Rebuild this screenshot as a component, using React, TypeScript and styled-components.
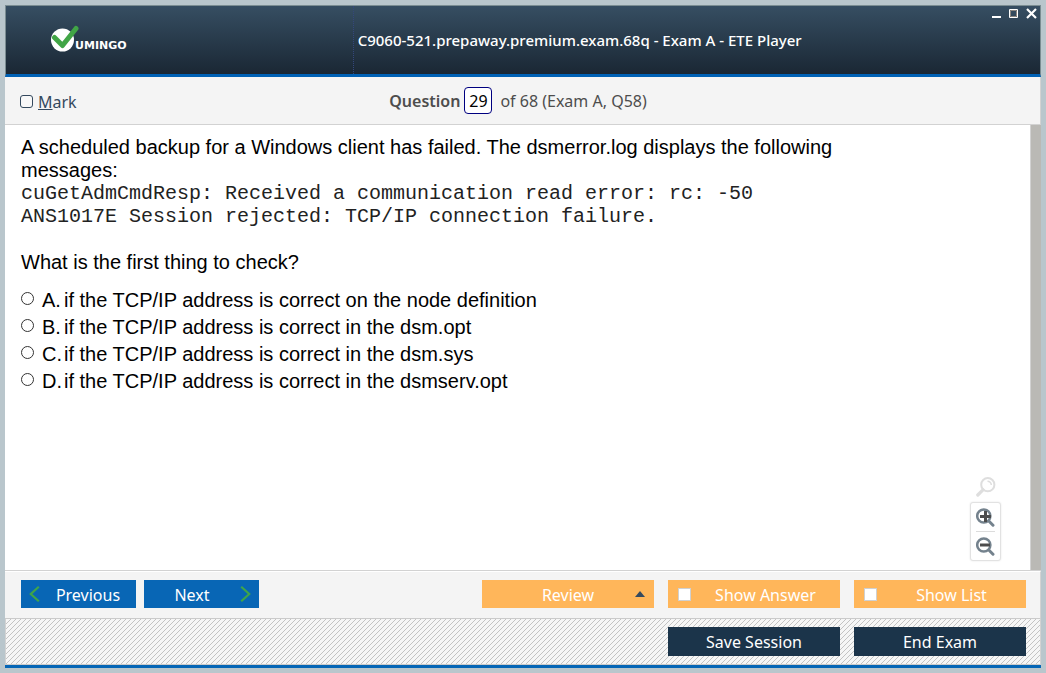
import React, { useState } from "react";
import styled, { createGlobalStyle, css } from "styled-components";

const ui = `"Noto Sans", "Open Sans", sans-serif`;

const GlobalStyle = createGlobalStyle`
  * { box-sizing: border-box; }
  html, body, #root { height: 100%; }
  body { margin: 0; background: #b9c6cc; font-family: ${ui}; font-size: 16px; }
  button, input { font: inherit; }
`;

const Desktop = styled.div`
  min-height: 100%;
  padding: 5px;
  display: flex;
`;

const Window = styled.div`
  flex: 1;
  min-width: 0;
  display: flex;
  flex-direction: column;
  background: #f4f4f4;
  border-bottom: 3px solid #0566b6;
`;

const TitleBar = styled.header`
  display: grid;
  grid-template-columns: 1fr 1fr 1fr;
  height: 72px;
  color: #fff;
  background: linear-gradient(#364e62, #1a2734);
  border: 1px solid #7b8d92;
  border-bottom: 3px solid #0061b5;
  & > * { min-width: 0; }
`;

const Brand = styled.div`
  align-self: center;
  padding-left: 44px;
  svg { display: block; }
`;

const Title = styled.h1`
  margin: 0 0 0 2px;
  padding-left: 4px;
  display: flex;
  align-items: center;
  font-size: 15px;
  font-weight: 500;
  white-space: nowrap;
  border-left: 1px dotted #34477c;
`;

const WindowControls = styled.div`
  display: flex;
  justify-content: flex-end;
  align-items: flex-start;
`;

const ControlButton = styled.button`
  padding: 0;
  border: 0;
  color: #fff;
  background: none;
  svg { display: block; }
`;

const QuestionBar = styled.div`
  display: grid;
  grid-template-columns: 1fr auto 1fr;
  align-items: center;
  height: 48px;
  padding: 0 24px 0 15px;
  color: #4d4d4d;
  border-right: 1px solid #d2d2d2;
  border-bottom: 1px solid #d2d2d2;
`;

const MarkLabel = styled.label`
  display: flex;
  align-items: center;
  gap: 5px;
  padding-top: 2px;
  font-size: 16px;
  color: #34495e;
`;

const MarkBox = styled.input`
  appearance: none;
  width: 13px;
  height: 13px;
  margin: 0;
  border: 1px solid #34495e;
  border-radius: 3px;
  background: #f8f8f8;
  &:checked { background: #34495e; }
`;

const Position = styled.div`
  display: flex;
  align-items: center;
  gap: 4px;
`;

const PositionLabel = styled.label`
  font-weight: 600;
`;

const PositionInput = styled.input`
  width: 28px;
  height: 27px;
  padding: 0;
  margin-right: 4px;
  text-align: center;
  color: #000;
  background: #fff;
  border: 1px solid #000080;
  border-radius: 4px;
`;

const Body = styled.main`
  flex: 1;
  display: flex;
  background: #fff;
  border-bottom: 1px solid #d2d2d2;
`;

const Content = styled.section`
  flex: 1;
  min-width: 0;
  padding: 11px 16px;
  font-family: "Liberation Sans", Arial, sans-serif;
  font-size: 20px;
  line-height: 23px;
  color: #000;
  position: relative;
`;

const Scenario = styled.p`
  margin: 0 0 23px;
  max-width: 840px;
`;

const Prompt = styled.p`
  margin: 0 0 13px;
`;

const Log = styled.code`
  display: block;
  font-family: "Liberation Mono", "Courier New", monospace;
  font-size: 20px;
  color: #222;
`;

const Answers = styled.fieldset`
  margin: 0;
  padding: 0;
  border: 0;
`;

const Answer = styled.label`
  display: grid;
  grid-template-columns: 21px 22px 1fr;
  align-items: center;
  height: 27px;
`;

const AnswerRadio = styled.input`
  appearance: none;
  width: 13px;
  height: 13px;
  margin: 0 0 4px;
  border: 1px solid #333;
  border-radius: 50%;
  background: #fff;
  &:checked { background: radial-gradient(#222 0 3px, #fff 4px); }
`;

const ZoomTools = styled.div`
  position: absolute;
  right: 29px;
  bottom: 9px;
  display: flex;
  flex-direction: column;
  align-items: center;
  gap: 5px;
  svg { display: block; }
`;

const ZoomGroup = styled.div`
  display: flex;
  flex-direction: column;
  padding: 0 5px;
  border: 1px solid #e2e2e2;
  border-radius: 3px;
  box-shadow: 0 0 2px #e4e4e4;
  background: #fff;
`;

const ZoomButton = styled.button`
  width: 19px;
  height: 28px;
  padding: 1px 0 0;
  border: 0;
  background: none;
  & + & { height: 29px; border-top: 1px solid #dcdcdc; }
`;

const ScrollTrack = styled.div`
  width: 11px;
  background: #bab9b5;
  border-left: 1px solid #d2d2d2;
`;

const ActionBar = styled.nav`
  display: flex;
  gap: 14px;
  height: 48px;
  padding: 8px 14px 0 16px;
  border-top: 1px solid #fff;
  border-right: 1px solid #d2d2d2;
  border-bottom: 1px solid #cbcbcb;
`;

const NavGroup = styled.div`
  display: flex;
  gap: 8px;
  margin-right: auto;
`;

const button = css`
  height: 28px;
  padding: 0;
  border: 0;
  color: #fff;
  font-size: 16px;
  line-height: 28px;
`;

const iconRow = css`
  ${button}
  display: flex;
  align-items: center;
  span { flex: 1; padding-top: 2px; text-align: center; }
`;

const NavButton = styled.button<{ $forward?: boolean }>`
  ${iconRow}
  width: 115px;
  flex-direction: ${(p) => (p.$forward ? "row-reverse" : "row")};
  padding: ${(p) => (p.$forward ? "0 8px 0 0" : "0 0 0 8px")};
  background: #0866b5;
`;

const ReviewButton = styled.button`
  ${iconRow}
  width: 172px;
  background: #ffb65a;
  padding: 0 9px 0 19px;
`;

const ToggleLabel = styled.label`
  ${iconRow}
  width: 172px;
  background: #ffb65a;
  padding: 0 0 0 10px;
`;

const ToggleBox = styled.input`
  appearance: none;
  width: 13px;
  height: 13px;
  margin: 0;
  border: 1px solid #d0d0d0;
  background: #fff;
  &:checked { background: #34495e; }
`;

const SessionBar = styled.footer`
  display: flex;
  justify-content: flex-end;
  gap: 14px;
  height: 46px;
  padding: 8px 14px 0;
  border-left: 1px solid #d2d2d2;
  border-right: 1px solid #d2d2d2;
  border-bottom: 1px solid #cbcbcb;
  background-color: #f6f6f6;
  background-image: url("data:image/svg+xml,%3Csvg xmlns='http://www.w3.org/2000/svg' width='5' height='5' shape-rendering='crispEdges'%3E%3Cpath fill='%23c3c3c3' d='M4 0h1v1h-1zM3 1h1v1h-1zM2 2h1v1h-1zM1 3h1v1h-1zM0 4h1v1h-1z'/%3E%3C/svg%3E");
`;

const DarkButton = styled.button`
  ${button}
  width: 172px;
  height: 29px;
  background: #1b344a;
`;

const Logo = () => (
  <svg width="84" height="30" viewBox="0 0 84 30" role="img" aria-label="Vumingo">
    <circle cx="12.5" cy="15" r="11.5" fill="#fff" />
    <path d="M4.5 12.5 L12.5 20.5 L26 3.5" fill="none" stroke="#41a546" strokeWidth="5" strokeLinecap="round" strokeLinejoin="round" />
    <text x="25" y="24" fill="#fff" fontFamily="DejaVu Sans, sans-serif" fontWeight="700" fontSize="11">UMINGO</text>
  </svg>
);

const Chevron = ({ forward }: { forward?: boolean }) => (
  <svg width="11" height="16" viewBox="0 0 11 16" fill="none" stroke="#3fa54a" strokeWidth="2.2" aria-hidden="true">
    <path d={forward ? "M1.2 0.8 L9.2 8 L1.2 15.2" : "M9.8 0.8 L1.8 8 L9.8 15.2"} />
  </svg>
);

const ResetZoomIcon = () => (
  <svg width="20" height="20" viewBox="0 0 20 20" fill="none" stroke="#dedede" aria-hidden="true">
    <circle cx="11.8" cy="7.7" r="6.6" strokeWidth="2" />
    <path d="M11.5 4.2 A3.8 3.8 0 0 1 15.3 8" strokeWidth="1.5" />
    <path d="M7 12.8 L1.8 18" strokeWidth="3.2" strokeLinecap="round" />
  </svg>
);

const LensIcon = ({ plus }: { plus?: boolean }) => (
  <svg width="19" height="20" viewBox="0 0 19 20" fill="none" aria-hidden="true">
    <circle cx="7.8" cy="8" r="6.6" stroke="#74828d" strokeWidth="2.5" />
    <path d="M12.8 13 L17 17.2" stroke="#74828d" strokeWidth="3" strokeLinecap="round" />
    <path d={plus ? "M4 8.5 H15 M9.5 3 V14" : "M4 8 H14"} stroke="#4c4c4c" strokeWidth="3" />
  </svg>
);

const answers = [
  ["A.", "if the TCP/IP address is correct on the node definition"],
  ["B.", "if the TCP/IP address is correct in the dsm.opt"],
  ["C.", "if the TCP/IP address is correct in the dsm.sys"],
  ["D.", "if the TCP/IP address is correct in the dsmserv.opt"],
];

export default function App() {
  const [position, setPosition] = useState("29");
  return (
    <>
      <GlobalStyle />
      <Desktop>
        <Window>
          <TitleBar>
            <Brand><Logo /></Brand>
            <Title>C9060-521.prepaway.premium.exam.68q - Exam A - ETE Player</Title>
            <WindowControls>
              <ControlButton aria-label="Minimize">
                <svg width="18" height="18"><path fill="currentColor" d="M6 10h9v2H6z" /></svg>
              </ControlButton>
              <ControlButton aria-label="Maximize">
                <svg width="18" height="18" fill="none">
                  <path stroke="currentColor" d="M5.5 3.5h8v8h-8z" />
                  <path stroke="#8c8680" d="M6.5 4.5h6v6h-6z" />
                </svg>
              </ControlButton>
              <ControlButton aria-label="Close">
                <svg width="18" height="18"><path stroke="currentColor" strokeWidth="2.2" d="M5 3l9 9M14 3l-9 9" /></svg>
              </ControlButton>
            </WindowControls>
          </TitleBar>
          <QuestionBar>
            <MarkLabel><MarkBox type="checkbox" /><span><u>M</u>ark</span></MarkLabel>
            <Position>
              <PositionLabel htmlFor="position">Question</PositionLabel>
              <PositionInput id="position" value={position} onChange={(e) => setPosition(e.target.value)} />
              <span>of 68 (Exam A, Q58)</span>
            </Position>
          </QuestionBar>
          <Body>
            <Content>
              <Scenario>
                A scheduled backup for a Windows client has failed. The dsmerror.log displays the following messages:
                <Log>cuGetAdmCmdResp: Received a communication read error: rc: -50</Log>
                <Log>ANS1017E Session rejected: TCP/IP connection failure.</Log>
              </Scenario>
              <Prompt>What is the first thing to check?</Prompt>
              <Answers>
                {answers.map(([letter, text]) => (
                  <Answer key={letter}>
                    <AnswerRadio type="radio" name="answer" />
                    <span>{letter}</span>
                    <span>{text}</span>
                  </Answer>
                ))}
              </Answers>
              <ZoomTools>
                <ResetZoomIcon />
                <ZoomGroup>
                  <ZoomButton aria-label="Zoom in"><LensIcon plus /></ZoomButton>
                  <ZoomButton aria-label="Zoom out"><LensIcon /></ZoomButton>
                </ZoomGroup>
              </ZoomTools>
            </Content>
            <ScrollTrack />
          </Body>
          <ActionBar>
            <NavGroup>
              <NavButton><Chevron /><span>Previous</span></NavButton>
              <NavButton $forward><Chevron forward /><span>Next</span></NavButton>
            </NavGroup>
            <ReviewButton>
              <span>Review</span>
              <svg width="10" height="6" aria-hidden="true"><path fill="#34495e" d="M5 0 L10 6 H0z" /></svg>
            </ReviewButton>
            <ToggleLabel><ToggleBox type="checkbox" /><span>Show Answer</span></ToggleLabel>
            <ToggleLabel><ToggleBox type="checkbox" /><span>Show List</span></ToggleLabel>
          </ActionBar>
          <SessionBar>
            <DarkButton>Save Session</DarkButton>
            <DarkButton>End Exam</DarkButton>
          </SessionBar>
        </Window>
      </Desktop>
    </>
  );
}
